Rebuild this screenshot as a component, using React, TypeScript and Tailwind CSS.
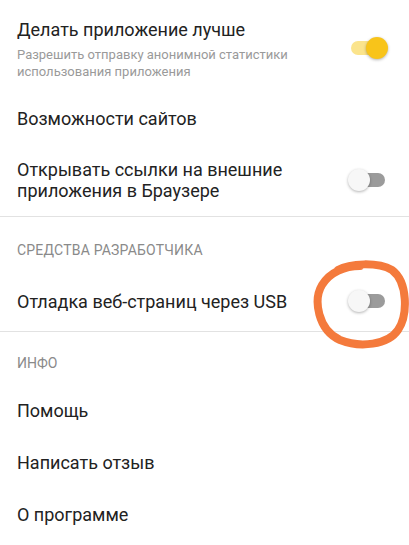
import React from "react";

function Toggle({ on }: { on: boolean }) {
  return (
    <div className="relative w-[40px] h-[22px] shrink-0">
      <div
        className={
          "absolute left-[3px] right-[3px] top-[4px] h-[14px] rounded-full " +
          (on ? "bg-[#fbe48c]" : "bg-[#9b9b9b]")
        }
      />
      <div
        className={
          "absolute top-0 w-[22px] h-[22px] rounded-full shadow-[0_1px_3px_rgba(0,0,0,0.3)] " +
          (on ? "right-0 bg-[#f8c41a]" : "left-0 bg-[#f7f7f7]")
        }
      />
    </div>
  );
}

export default function App() {
  const font = { fontFamily: "Roboto, 'Noto Sans', sans-serif" };
  return (
    <div className="relative w-[409px] h-[545px] bg-white overflow-hidden text-[#222]" style={font}>
      {/* Row 1 */}
      <div className="flex items-center h-[92px] pl-[17px] pr-[21px]">
        <div className="flex-1 pt-[6px]">
          <div className="text-[18px] leading-[24px]">Делать приложение лучше</div>
          <div className="text-[13px] leading-[17px] text-[#9a9a9a] mt-[4px]">
            Разрешить отправку анонимной статистики
            <br />
            использования приложения
          </div>
        </div>
        <div className="mt-[4px]">
          <Toggle on />
        </div>
      </div>
      <div className="flex items-center h-[52px] pl-[17px] text-[18px]">Возможности сайтов</div>
      <div className="flex items-center h-[72px] pl-[17px] pr-[21px]">
        <div className="flex-1 text-[18px] leading-[21px]">
          Открывать ссылки на внешние
          <br />
          приложения в Браузере
        </div>
        <Toggle on={false} />
      </div>
      <div className="h-px bg-[#e2e2e2]" />
      <div className="flex items-center h-[58px] pl-[17px] pt-[8px] text-[14px] text-[#8a8a8a] tracking-[0.2px]">
        СРЕДСТВА РАЗРАБОТЧИКА
      </div>
      <div className="flex items-center h-[56px] pb-[4px] pl-[17px] pr-[21px]">
        <div className="flex-1 text-[18px]">Отладка веб-страниц через USB</div>
        <Toggle on={false} />
      </div>
      <div className="h-px bg-[#e2e2e2]" />
      <div className="flex items-center h-[52px] pl-[17px] pt-[10px] text-[14px] text-[#8a8a8a]">ИНФО</div>
      <div className="flex items-center h-[52px] pl-[17px] text-[18px]">Помощь</div>
      <div className="flex items-center h-[52px] pl-[17px] text-[18px]">Написать отзыв</div>
      <div className="flex items-center h-[52px] pl-[17px] text-[18px]">О программе</div>

      <svg className="absolute left-0 top-0 pointer-events-none" width="409" height="545">
        <path
          d="M338 270 C350 263 378 262 392 270 C408 282 408 315 398 330 C388 345 360 348 340 340 C318 330 313 300 322 285 C330 272 345 266 360 266"
          fill="none"
          stroke="#f47a3c"
          strokeWidth="8"
          strokeLinecap="round"
        />
      </svg>
    </div>
  );
}
